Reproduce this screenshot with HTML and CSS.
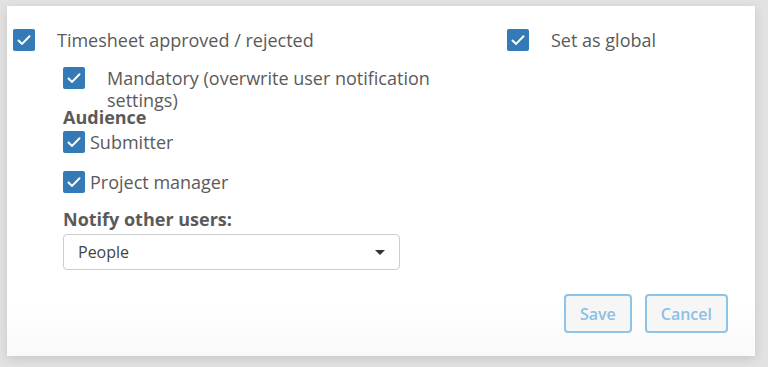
FILE: index.html
```html
<!DOCTYPE html>
<html lang="en">
<head>
    <meta charset="UTF-8">
    <meta name="viewport" content="width=device-width, initial-scale=1.0">
    <title>Notification settings</title>
    <link rel="stylesheet" href="styles.css">
</head>
<body>

<!-- 알림 설정 카드 -->
<div class="card">
    <div class="row">
        <div class="col-main">
            <label class="check-row">
                <span class="box"><svg viewBox="0 0 22 22"><path d="M5.5 11.5l3.6 3.4 7.4-7.6"/></svg></span>
                <span class="check-text wide">Timesheet approved / rejected</span>
            </label>

            <div class="sub">
                <label class="check-row mandatory">
                    <span class="box"><svg viewBox="0 0 22 22"><path d="M5.5 11.5l3.6 3.4 7.4-7.6"/></svg></span>
                    <span class="check-text wide">Mandatory (overwrite user notification settings)</span>
                </label>

                <div class="section-title">Audience</div>
                <label class="check-row audience">
                    <span class="box"><svg viewBox="0 0 22 22"><path d="M5.5 11.5l3.6 3.4 7.4-7.6"/></svg></span>
                    <span class="check-text">Submitter</span>
                </label>
                <label class="check-row audience">
                    <span class="box"><svg viewBox="0 0 22 22"><path d="M5.5 11.5l3.6 3.4 7.4-7.6"/></svg></span>
                    <span class="check-text">Project manager</span>
                </label>

                <div class="section-title notify">Notify other users:</div>
                <div class="select">
                    <span>People</span>
                    <span class="caret"></span>
                </div>
            </div>
        </div>

        <div class="col-side">
            <label class="check-row">
                <span class="box"><svg viewBox="0 0 22 22"><path d="M5.5 11.5l3.6 3.4 7.4-7.6"/></svg></span>
                <span class="check-text wide">Set as global</span>
            </label>
        </div>
    </div>

    <div class="actions">
        <button class="btn" disabled>Save</button>
        <button class="btn" disabled>Cancel</button>
    </div>
</div>

</body>
</html>
```

FILE: styles.css
```css
body {
    font-family: "Open Sans", Arial, sans-serif;
    background-color: #e2e2e2;
    color: #5a5a5a;
    margin: 0;
    padding: 6px 13px 11px 7px;
    height: 367px;
    box-sizing: border-box;
}

.card {
    background: linear-gradient(#fff 85%, #f9f9f9);
    height: 350px;
    box-sizing: border-box;
    padding: 23px 6px 0 6px;
    box-shadow: 0 3px 10px rgba(0, 0, 0, 0.12);
    display: flex;
    flex-direction: column;
}

.row {
    display: grid;
    grid-template-columns: 494px 1fr;
}

.check-row {
    display: flex;
    align-items: flex-start;
    font-size: 18px;
    line-height: 22px;
}

.box {
    flex: none;
    width: 22px;
    height: 22px;
    background-color: #337ab7;
    border-radius: 2px;
}

.box svg {
    display: block;
    width: 22px;
    height: 22px;
    fill: none;
    stroke: #fff;
    stroke-width: 2;
    stroke-linecap: round;
    stroke-linejoin: round;
}

.check-text {
    margin-left: 5px;
}

.check-text.wide {
    margin-left: 22px;
}

.sub {
    padding-left: 50px;
}

.mandatory {
    margin-top: 16px;
    padding-right: 40px;
}

.section-title {
    font-weight: bold;
    font-size: 18px;
    line-height: 20px;
    margin-top: -4px;
    margin-bottom: 4px;
}

.audience {
    margin-bottom: 18px;
}

.section-title.notify {
    margin-top: -2px;
    margin-bottom: 5px;
}

.select {
    width: 337px;
    height: 36px;
    box-sizing: border-box;
    border: 1px solid #ccc;
    border-radius: 4px;
    display: flex;
    align-items: center;
    justify-content: space-between;
    padding: 0 14px 0 14px;
    font-size: 16px;
    color: #444;
}

.caret {
    width: 0;
    height: 0;
    border-left: 5px solid transparent;
    border-right: 5px solid transparent;
    border-top: 5px solid #333;
}

.actions {
    margin-top: auto;
    margin-bottom: 23px;
    display: flex;
    justify-content: flex-end;
    gap: 13px;
    padding-right: 21px;
}

.btn {
    font-family: "Open Sans", Arial, sans-serif;
    font-size: 16px;
    font-weight: 600;
    color: #8cc0e4;
    background-color: #f6f6f6;
    border: 2px solid #8dc4e8;
    border-radius: 4px;
    height: 39px;
    width: auto;
    padding: 0 14px;
}
```
